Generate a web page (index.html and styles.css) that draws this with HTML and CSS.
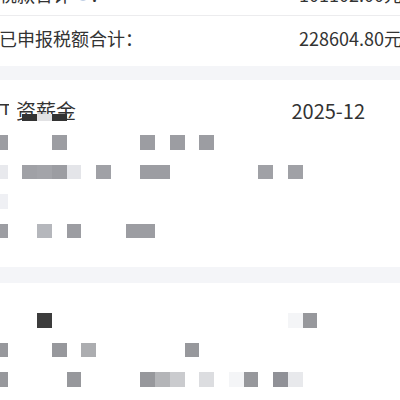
FILE: index.html
```html
<!DOCTYPE html>
<html lang="zh-CN">
<head>
<meta charset="utf-8">
<title>个税记录</title>
<link rel="stylesheet" href="styles.css">
</head>
<body>
<div class="page">
  <section class="card card-sum">
    <div class="row row-cut">
      <span class="label">税款合计<svg class="info" viewBox="0 0 14 14" width="14" height="14"><circle cx="7" cy="7" r="6" fill="none" stroke="#a9bddb" stroke-width="1.4"/><text x="7" y="10.5" font-size="9" text-anchor="middle" fill="#a9bddb" font-family="Liberation Sans, sans-serif">?</text></svg>：</span>
      <span class="val">101102.00元</span>
    </div>
    <div class="row row-main">
      <span class="label">已申报税额合计：</span>
      <span class="val">228604.80元</span>
    </div>
  </section>

  <section class="card card-item">
    <div class="head">
      <span class="title">工资薪金</span>
      <span class="date">2025-12</span>
      <i class="patch patch-a"></i>
      <i class="patch patch-b"></i>
      <i class="smudge s1"></i>
      <i class="smudge s2"></i>
      <i class="smudge s3"></i>
    </div>
    <div class="mosaic">
      <div class="mz">
        <i class="k0 m1"></i><i class="k4 m1"></i><i class="k10 m1"></i><i class="k12 m1"></i><i class="k14 m1"></i>
      </div>
      <div class="mz">
        <i class="k0 l2"></i><i class="k2 m2"></i><i class="k3 m3"></i><i class="k4 m1"></i><i class="k5 l3"></i><i class="k7 m2"></i><i class="k10 m1"></i><i class="k11 m1"></i><i class="k18 m2"></i><i class="k20 m2"></i>
      </div>
      <div class="mz">
        <i class="k0 l1"></i>
      </div>
      <div class="mz">
        <i class="k0 m1"></i><i class="k3 m4"></i><i class="k5 m1"></i><i class="k9 m1"></i><i class="k10 m1"></i>
      </div>
    </div>
  </section>

  <section class="card card-item2">
    <div class="mosaic">
      <div class="mz">
        <i class="k3 d1"></i><i class="k20 l4"></i><i class="k21 n1"></i>
      </div>
      <div class="mz">
        <i class="k0 n1"></i><i class="k4 n1"></i><i class="k6 n2"></i><i class="k13 n1"></i>
      </div>
      <div class="mz">
        <i class="k0 n1"></i><i class="k5 n1"></i><i class="k10 n1"></i><i class="k11 n3"></i><i class="k12 n4"></i><i class="k14 n5"></i><i class="k16 l4"></i><i class="k17 n1"></i><i class="k19 n6"></i><i class="k20 n7"></i>
      </div>
    </div>
  </section>
</div>
</body>
</html>
```

FILE: styles.css
```css
html, body {
  margin: 0;
  padding: 0;
}

body {
  width: 400px;
  height: 400px;
  overflow: hidden;
  background: #f4f5f8;
  font-family: "Noto Sans CJK SC", "Noto Sans", sans-serif;
  color: #333333;
}

.page {
  margin-top: -28px;
  width: 402px;
}

.card {
  background: #ffffff;
}

.card-sum {
  margin-bottom: 14px;
}

.row {
  display: flex;
  justify-content: space-between;
  align-items: center;
  box-sizing: border-box;
  font-size: 18px;
  line-height: 24px;
}

.row-cut {
  height: 44px;
  border-bottom: 1px solid #ececee;
}

.row-main {
  height: 50px;
  padding-bottom: 7px;
}

.label {
  display: flex;
  align-items: center;
  margin-left: -1px;
}

.info {
  margin-left: 5px;
}

.card-item {
  padding-top: 19px;
  padding-bottom: 28.75px;
  margin-bottom: 16px;
}

.head {
  position: relative;
  display: flex;
  justify-content: space-between;
  align-items: center;
  height: 24px;
  line-height: 24px;
  font-size: 20px;
  margin-bottom: 12px;
}

.title {
  margin-left: -4px;
}

.date {
  margin-right: 37px;
}

.patch {
  position: absolute;
  background: #ffffff;
}

.patch-a {
  left: 9px;
  top: 0;
  width: 8px;
  height: 24px;
}

.patch-b {
  left: 0;
  top: 16px;
  width: 9px;
  height: 8px;
}

.smudge {
  position: absolute;
  top: 15px;
  height: 7px;
  width: 15px;
}

.s1 { left: 22px; background: #333333; }
.s2 { left: 37px; background: #e2e2e4; }
.s3 { left: 52px; background: #333333; }

.card-item2 {
  padding-top: 30px;
  height: 200px;
}

.mosaic {
  display: flex;
  flex-direction: column;
  gap: 14.75px;
  margin-left: -7.25px;
}

.mz {
  display: grid;
  grid-template-columns: repeat(22, 14.75px);
  grid-template-rows: 14.75px;
  height: 14.75px;
}

.mz i {
  display: block;
  grid-row: 1;
}

.k0 { grid-column: 1; }
.k2 { grid-column: 3; }
.k3 { grid-column: 4; }
.k4 { grid-column: 5; }
.k5 { grid-column: 6; }
.k6 { grid-column: 7; }
.k7 { grid-column: 8; }
.k9 { grid-column: 10; }
.k10 { grid-column: 11; }
.k11 { grid-column: 12; }
.k12 { grid-column: 13; }
.k13 { grid-column: 14; }
.k14 { grid-column: 15; }
.k16 { grid-column: 17; }
.k17 { grid-column: 18; }
.k18 { grid-column: 19; }
.k19 { grid-column: 20; }
.k20 { grid-column: 21; }
.k21 { grid-column: 22; }

.m1 { background: #9c9da2; }
.m2 { background: #a0a1a6; }
.m3 { background: #a3a4a9; }
.m4 { background: #b5b7bc; }
.l1 { background: #eff0f4; }
.l2 { background: #e8e9ed; }
.l3 { background: #e4e5e9; }
.l4 { background: #f4f5f7; }
.d1 { background: #3c3c3c; }
.n1 { background: #97989c; }
.n2 { background: #acadb0; }
.n3 { background: #b4b5b8; }
.n4 { background: #cacbce; }
.n5 { background: #dcdde0; }
.n6 { background: #909197; }
.n7 { background: #e8e9ec; }
```
